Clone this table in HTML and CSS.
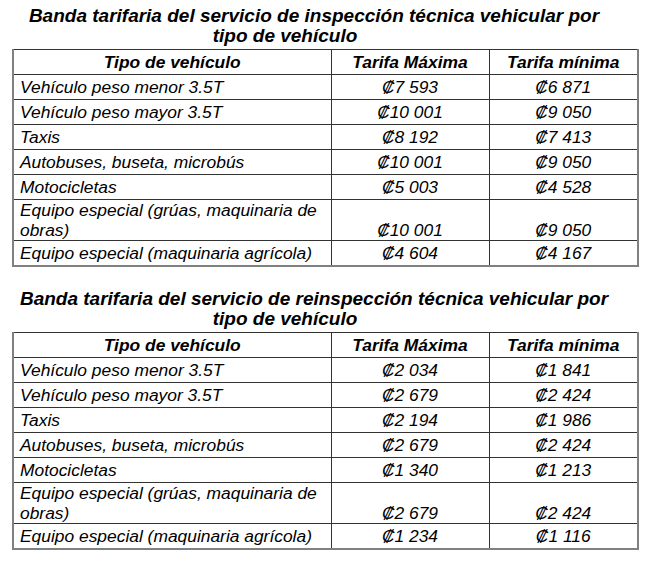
FILE: index.html
```html
<!DOCTYPE html>
<html lang="es">
<head>
<meta charset="utf-8">
<title>Banda tarifaria</title>
<link rel="stylesheet" href="styles.css">
</head>
<body>
<div class="page">
  <section class="block">
    <h2 class="title"><span class="line">Banda tarifaria del servicio de inspección técnica vehicular por</span><span class="line second">tipo de vehículo</span></h2>
    <table class="rates">
      <colgroup><col class="c1"><col class="c2"><col class="c3"></colgroup>
      <thead>
        <tr><th>Tipo de vehículo</th><th>Tarifa Máxima</th><th>Tarifa mínima</th></tr>
      </thead>
      <tbody>
        <tr><td>Vehículo peso menor 3.5T</td><td class="num">₡7 593</td><td class="num">₡6 871</td></tr>
        <tr><td>Vehículo peso mayor 3.5T</td><td class="num">₡10 001</td><td class="num">₡9 050</td></tr>
        <tr><td>Taxis</td><td class="num">₡8 192</td><td class="num">₡7 413</td></tr>
        <tr><td>Autobuses, buseta, microbús</td><td class="num">₡10 001</td><td class="num">₡9 050</td></tr>
        <tr><td>Motocicletas</td><td class="num">₡5 003</td><td class="num">₡4 528</td></tr>
        <tr class="double"><td>Equipo especial (grúas, maquinaria de obras)</td><td class="num">₡10 001</td><td class="num">₡9 050</td></tr>
        <tr><td>Equipo especial (maquinaria agrícola)</td><td class="num">₡4 604</td><td class="num">₡4 167</td></tr>
      </tbody>
    </table>
  </section>
  <section class="block">
    <h2 class="title"><span class="line">Banda tarifaria del servicio de reinspección técnica vehicular por</span><span class="line second">tipo de vehículo</span></h2>
    <table class="rates">
      <colgroup><col class="c1"><col class="c2"><col class="c3"></colgroup>
      <thead>
        <tr><th>Tipo de vehículo</th><th>Tarifa Máxima</th><th>Tarifa mínima</th></tr>
      </thead>
      <tbody>
        <tr><td>Vehículo peso menor 3.5T</td><td class="num">₡2 034</td><td class="num">₡1 841</td></tr>
        <tr><td>Vehículo peso mayor 3.5T</td><td class="num">₡2 679</td><td class="num">₡2 424</td></tr>
        <tr><td>Taxis</td><td class="num">₡2 194</td><td class="num">₡1 986</td></tr>
        <tr><td>Autobuses, buseta, microbús</td><td class="num">₡2 679</td><td class="num">₡2 424</td></tr>
        <tr><td>Motocicletas</td><td class="num">₡1 340</td><td class="num">₡1 213</td></tr>
        <tr class="double"><td>Equipo especial (grúas, maquinaria de obras)</td><td class="num">₡2 679</td><td class="num">₡2 424</td></tr>
        <tr><td>Equipo especial (maquinaria agrícola)</td><td class="num">₡1 234</td><td class="num">₡1 116</td></tr>
      </tbody>
    </table>
  </section>
</div>
</body>
</html>
```

FILE: styles.css
```css
html, body {
  margin: 0;
  padding: 0;
  background: #ffffff;
}

body {
  font-family: "Liberation Sans", Arial, sans-serif;
  color: #000000;
}

.page {
  padding-top: 6px;
}

.block + .block {
  margin-top: 22px;
}

.title {
  width: 628px;
  margin: 0 0 3px 0;
  font-size: 19px;
  line-height: 20px;
  font-weight: bold;
  font-style: italic;
  text-align: center;
}

.title .line {
  display: block;
}

.title .second {
  padding-right: 58px;
}

.rates {
  margin-left: 12px;
  width: 625px;
  border-collapse: collapse;
  table-layout: fixed;
  font-size: 17.4px;
  font-style: italic;
  border-top: 1px solid #333333;
  border-left: 2px solid #808080;
  border-right: 2px solid #808080;
  border-bottom: 2px solid #808080;
}

.rates .c1 { width: 318px; }
.rates .c2 { width: 158px; }
.rates .c3 { width: 149px; }

.rates th,
.rates td {
  border: 1px solid #333333;
  padding: 2px 6px 2px 6px;
  line-height: 20px;
  vertical-align: middle;
}

.rates th {
  font-weight: bold;
  text-align: center;
}

.rates td {
  font-weight: normal;
  text-align: left;
}

.rates td.num {
  text-align: center;
}

.rates tr.double td {
  padding-top: 0;
  padding-bottom: 0;
}

.rates tr.double td.num {
  vertical-align: bottom;
}

.rates tr:first-child th { border-top: 1px solid #333333; }
.rates tr th:first-child,
.rates tr td:first-child { border-left: 2px solid #808080; }
.rates tr th:last-child,
.rates tr td:last-child { border-right: 2px solid #808080; }
.rates tbody tr:last-child td { border-bottom: 2px solid #808080; }
```
